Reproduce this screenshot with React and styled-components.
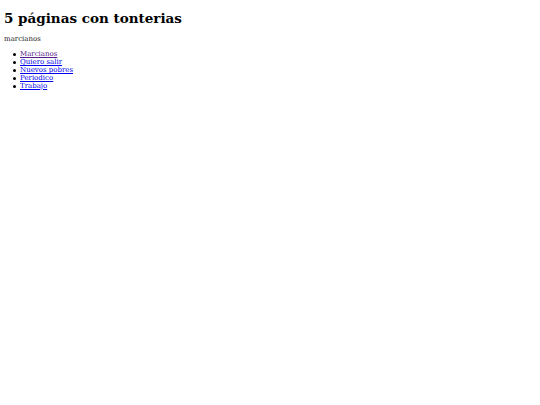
import React from "react";
import styled, { createGlobalStyle } from "styled-components";

const Global = createGlobalStyle`
  html, body {
    margin: 0;
    background: #ffffff;
  }
  body {
    padding: 4px;
    font-family: "DejaVu Serif", serif;
    color: #000000;
  }
`;

const links = [
  { label: "Marcianos", visited: true },
  { label: "Quiero salir" },
  { label: "Nuevos pobres" },
  { label: "Periodico" },
  { label: "Trabajo" },
];

const App = () => {
  return (
    <Page>
      <Global />
      <Title>5 páginas con tonterias</Title>
      <Intro>marcianos</Intro>
      <LinkList>
        {links.map((link) => (
          <ListRow key={link.label}>
            <LinkItem href="#" $visited={link.visited}>
              {link.label}
            </LinkItem>
          </ListRow>
        ))}
      </LinkList>
    </Page>
  );
};

export default App;

const Page = styled.div`
  display: flex;
  flex-direction: column;
`;

const Title = styled.h1`
  font-size: 13.5px;
  font-weight: bold;
  line-height: 14px;
  margin: 7px 0 0;
`;

const Intro = styled.p`
  font-size: 7px;
  line-height: 8px;
  margin: 10px 0 0;
  color: #222;
`;

const LinkList = styled.ul`
  margin: 7px 0 0;
  padding-left: 16px;
  font-size: 7px;
  line-height: 8px;
  list-style: none;
`;

const ListRow = styled.li`
  position: relative;

  &::before {
    content: "";
    position: absolute;
    left: -7px;
    top: 3px;
    width: 3px;
    height: 3px;
    border-radius: 50%;
    background: #000;
  }
`;

const LinkItem = styled.a`
  color: ${(p) => (p.$visited ? "#551a8b" : "#0000ee")};
  text-decoration: underline;
`;
